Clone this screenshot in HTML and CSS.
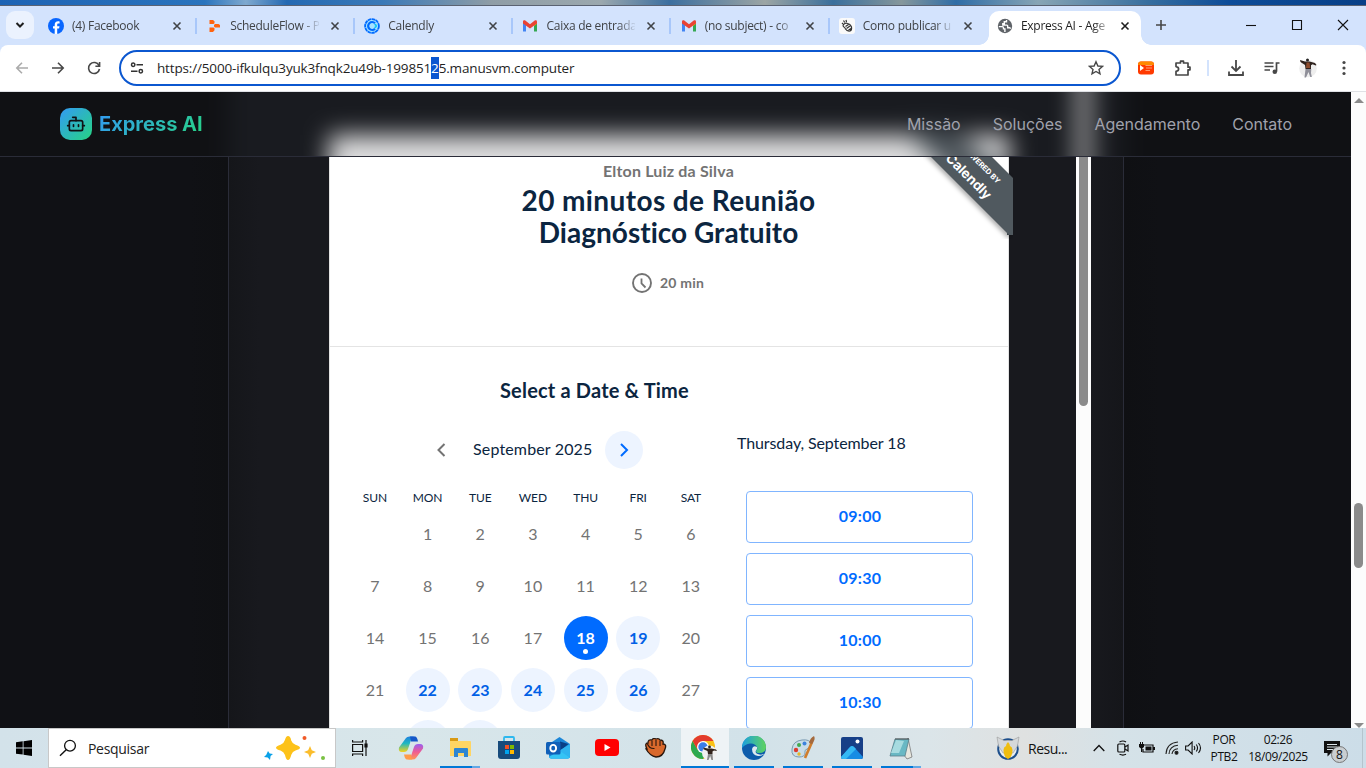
FILE: index.html
```html
<!DOCTYPE html>
<html lang="pt-BR">
<head>
<meta charset="utf-8">
<title>Express AI - Agendamento</title>
<link rel="stylesheet" href="styles.css">
</head>
<body>
<div class="screen">
  <div class="wallpaper"></div>
  <div class="tabstrip">
    <div class="tab-search"><svg width="10" height="10" viewBox="0 0 10 10"><path d="M1.500 3l3.500 3.500L8.500 3" fill="none" stroke="#1f1f1f" stroke-width="2"/></svg></div>
    <div class="tab">
      <svg class="fav" viewBox="0 0 16 16"><circle cx="8" cy="8" r="8" fill="#0866ff"/><path d="M6.700 15.900V10.600H5V8.200h1.700V7c0-2.500 1.200-3.700 3.500-3.700.5 0 1 .1 1.400.1v2.100h-1.100c-1 0-1.300.4-1.300 1.300v1.400h2.300l-.4 2.400H9.200v5.300z" fill="#fff"/></svg>
      <span class="tab-label">(4) Facebook</span><svg class="x" viewBox="0 0 16 16"><path d="M4.500 4.500l7 7m0-7l-7 7"/></svg><i class="sep"></i>
    </div>
    <div class="tab">
      <svg class="fav" viewBox="0 0 16 16"><path d="M3.500 2H7l1.500 1.200v2L7.500 6h-4zM9 6h3.500L14 7v2.500H9L8 8.500v-1.500zM3.500 9.500h4l1 .8v2L7 14H3.500z" fill="#ff6410"/></svg>
      <span class="tab-label">ScheduleFlow - P</span><svg class="x" viewBox="0 0 16 16"><path d="M4.500 4.500l7 7m0-7l-7 7"/></svg><i class="sep"></i>
    </div>
    <div class="tab">
      <svg class="fav" viewBox="0 0 16 16"><circle cx="8" cy="8" r="6.900" fill="#a6e1ff" stroke="#006bff" stroke-width="1.800" stroke-dasharray="3.500 .5"/><path d="M11 10.800A4 4 0 1 1 11 5.200" fill="none" stroke="#006bff" stroke-width="2.200"/><path d="M10.500 6.300q3.500 1.500 0 3.500" fill="none" stroke="#0ac4f5" stroke-width="1.600"/></svg>
      <span class="tab-label">Calendly</span><svg class="x" viewBox="0 0 16 16"><path d="M4.500 4.500l7 7m0-7l-7 7"/></svg><i class="sep"></i>
    </div>
    <div class="tab">
      <svg class="fav" viewBox="0 0 16 16"><path d="M1 4v9.500h3V7z" fill="#4285f4"/><path d="M15 4v9.500h-3V7z" fill="#34a853"/><path d="M12 4.500V8l3-2.300V4z" fill="#fbbc04"/><path d="M1 3.800C1 2.300 2.500 2 3.600 2.800L8 6.200l4.400-3.400C13.500 2 15 2.300 15 3.800v1.800l-7 5-7-5z" fill="#ea4335"/></svg>
      <span class="tab-label">Caixa de entrada</span><svg class="x" viewBox="0 0 16 16"><path d="M4.500 4.500l7 7m0-7l-7 7"/></svg><i class="sep"></i>
    </div>
    <div class="tab">
      <svg class="fav" viewBox="0 0 16 16"><path d="M1 4v9.500h3V7z" fill="#4285f4"/><path d="M15 4v9.500h-3V7z" fill="#34a853"/><path d="M12 4.500V8l3-2.300V4z" fill="#fbbc04"/><path d="M1 3.800C1 2.300 2.500 2 3.600 2.800L8 6.200l4.400-3.400C13.500 2 15 2.300 15 3.800v1.800l-7 5-7-5z" fill="#ea4335"/></svg>
      <span class="tab-label">(no subject) - co</span><svg class="x" viewBox="0 0 16 16"><path d="M4.500 4.500l7 7m0-7l-7 7"/></svg><i class="sep"></i>
    </div>
    <div class="tab">
      <svg class="fav" viewBox="0 0 16 16"><rect width="16" height="16" rx="3" fill="#fafafa"/><g fill="none" stroke="#333" stroke-width="1.200"><path d="M4.500 6.500q2-2 4-1 3 .5 4 3.500.5 3-1.500 4-3 .5-4.500-2-.5-1.500-1.500-2-1.500-1-.5-2.500zM6.500 8.500l3-2M7.500 10.500l3.500-2.500M9.500 12l2.500-1.500"/><path d="M4.500 2.500l1.200 2M7 2l.5 2.200M3 5l1 1"/></g></svg>
      <span class="tab-label">Como publicar u</span><svg class="x" viewBox="0 0 16 16"><path d="M4.500 4.500l7 7m0-7l-7 7"/></svg>
    </div>
    <div class="tab active">
      <svg class="fav" viewBox="0 0 16 16"><circle cx="8" cy="8" r="7.200" fill="#5f6368"/><path d="M1.800 8.600h3.400q1.300 0 1.300 1.300v1h1.400v3.200M9.500 2v1.700H7.300v2h-1.500v1.400h4q.9 0 .9 1v1.600h1.800q.9 0 1 1" fill="none" stroke="#fff" stroke-width="1.400"/></svg>
      <span class="tab-label">Express AI - Age</span><svg class="x" viewBox="0 0 16 16"><path d="M4.500 4.500l7 7m0-7l-7 7"/></svg>
    </div>
    <svg class="plus" width="12" height="12" viewBox="0 0 12 12"><path d="M6 1v10M1 6h10" stroke="#474747" stroke-width="1.600"/></svg>
    <div class="winctl">
      <svg width="12" height="12" viewBox="0 0 12 12"><path d="M1 6.500h10" /></svg>
      <svg width="12" height="12" viewBox="0 0 12 12"><path d="M1.500 1.500h9v9h-9z"/></svg>
      <svg width="12" height="12" viewBox="0 0 12 12"><path d="M1 1l10 10M11 1L1 11"/></svg>
    </div>
  </div>

  <div class="toolbar">
    <div class="navbtns">
      <svg class="dim" viewBox="0 0 16 16"><path d="M14 8H3M8 2.800L2.800 8 8 13.200"/></svg>
      <svg viewBox="0 0 16 16"><path d="M2 8h11M8 2.800L13.200 8 8 13.200"/></svg>
      <svg viewBox="0 0 16 16"><path d="M13 5.500A5.500 5.500 0 1 0 13.500 9M13.600 2v4.200H9.400"/></svg>
    </div>
    <div class="omnibox">
      <svg class="tune" viewBox="0 0 14 14"><g fill="none" stroke="#333" stroke-width="1.500"><circle cx="3.200" cy="3.800" r="1.700"/><path d="M6.500 3.800H13M1 10.200h6.500"/><circle cx="10.800" cy="10.200" r="1.700"/></g></svg>
      <span class="url">https://5000-ifkulqu3yuk3fnqk2u49b-199851<mark>2</mark>5.manusvm.computer</span>
      <svg class="star" viewBox="0 0 16 16"><path d="M8 1.800l1.900 4.200 4.500.4-3.400 3 1 4.500L8 11.500 4 13.900l1-4.500-3.400-3L6.100 6z" fill="none" stroke="#474747" stroke-width="1.400"/></svg>
    </div>
    <div class="actions">
      <svg width="16" height="14" viewBox="0 0 16 14"><rect width="16" height="13" y=".5" rx="3" fill="#ff3a00"/><path d="M0 4q0-3.500 3-3.500h10q3 0 3 3.500z" fill="#ff8a00"/><path d="M2 4l4 3-4 3z" fill="#fff"/><path d="M7.500 4.500h6.500M8 7h6M7.500 9.500H12" stroke="#ff9a70" stroke-width="1.200"/></svg>
      <svg class="puzzle" width="18" height="18" viewBox="0 0 18 18"><path d="M2 4h4.500V2.200h3V4H14v4.200h2v2.600h-2V16H2v-3.600q2.600-.4 2.600-2.400T2 7.600z" fill="none" stroke="#474747" stroke-width="1.700" stroke-linejoin="round"/></svg>
      <i class="divider"></i>
      <svg class="act" width="18" height="18" viewBox="0 0 18 18"><path d="M9 1v11M4.500 7.500L9 12l4.500-4.500M2 12.500V16h14v-3.500" fill="none" stroke="#474747" stroke-width="1.800"/></svg>
      <svg class="act" width="18" height="18" viewBox="0 0 18 18"><path d="M1.500 4h9M1.500 7.500h9M1.500 11h5.500M16.500 4h-3v8.500" fill="none" stroke="#474747" stroke-width="1.700"/><circle cx="11.800" cy="12.700" r="2.300" fill="#474747"/></svg>
      <svg class="act" width="18" height="20" viewBox="0 0 18 20"><circle cx="9" cy="10.500" r="8.800" fill="#eee"/><circle cx="8.500" cy="2" r="1.500" fill="#222"/><path d="M1 2l5 1.500h4.500L16 5l1.500 2-.7.500-3.300-1.200-1.500 1V11H6.500L6 7 1.500 4z" fill="#2d211c"/><path d="M7.500 4.500h3l.8 5.500H7z" fill="#8c4a2c"/><path d="M6.500 11h5.800l-.3 4 .8 4h-1.500L9.500 14 7 19.500H5.500z" fill="#8f8f99"/></svg>
      <svg class="more" width="4" height="16" viewBox="0 0 4 16" fill="#474747"><circle cx="2" cy="2.500" r="1.600"/><circle cx="2" cy="8" r="1.600"/><circle cx="2" cy="13.500" r="1.600"/></svg>
    </div>
  </div>

  <div class="viewport">
    <div class="page">
      <div class="panel">
        <div class="card">
          <p class="owner">Elton Luiz da Silva</p>
          <h1><span>20 minutos de Reunião</span><br><em>Diagnóstico Gratuito</em></h1>
          <p class="duration"><svg width="20" height="20" viewBox="0 0 20 20"><circle cx="10" cy="10" r="9" fill="none" stroke="#737373" stroke-width="1.900"/><path d="M9.500 5.500v5l4 4" fill="none" stroke="#737373" stroke-width="1.800"/></svg>20 min</p>
          <div class="booking">
            <section class="calendar">
              <h2>Select a Date &amp; Time</h2>
              <div class="month">
                <svg class="prev" width="38" height="38" viewBox="0 0 38 38"><path d="M21.500 13L15.500 19l6 6" fill="none" stroke="#737373" stroke-width="2"/></svg>
                <span>September 2025</span>
                <svg width="38" height="38" viewBox="0 0 38 38"><circle cx="19" cy="19" r="19" fill="#edf4ff"/><path d="M16 13l6 6-6 6" fill="none" stroke="#006bff" stroke-width="2"/></svg>
              </div>
              <div class="grid days"><b>SUN</b><b>MON</b><b>TUE</b><b>WED</b><b>THU</b><b>FRI</b><b>SAT</b></div>
              <div class="grid dates">
                <span></span><span>1</span><span>2</span><span>3</span><span>4</span><span>5</span><span>6</span>
                <span>7</span><span>8</span><span>9</span><span>10</span><span>11</span><span>12</span><span>13</span>
                <span>14</span><span>15</span><span>16</span><span>17</span><span class="open today">18</span><span class="open">19</span><span>20</span>
                <span>21</span><span class="open">22</span><span class="open">23</span><span class="open">24</span><span class="open">25</span><span class="open">26</span><span>27</span>
                <span></span><span class="open"></span><span class="open"></span>
              </div>
            </section>
            <section class="times">
              <p>Thursday, September 18</p>
              <button>09:00</button><button>09:30</button><button>10:00</button><button>10:30</button>
            </section>
          </div>
          <div class="ribbon">
            <svg width="90" height="110" viewBox="0 0 90 110"><path d="M84 100v6h6v-6z" fill="#3c464c"/><path d="M-22 -2L84 104l2 2h4V49L39 -2z" fill="#50595f"/></svg>
            <span class="powered">POWERED BY</span><span class="brand">Calendly</span>
          </div>
        </div>
        <div class="frame-scroll"><i></i></div>
      </div>
      <header class="site-nav">
        <svg class="glow" width="1351" height="64" viewBox="0 0 1351 64">
          <defs><filter id="soft" filterUnits="userSpaceOnUse" x="-60" y="-100" width="1480" height="330" color-interpolation-filters="sRGB"><feGaussianBlur stdDeviation="12"/></filter></defs>
          <g filter="url(#soft)">
            <path d="M-60 -100h1480v330H-60z" fill="#101114"/>
            <path d="M228 -100h896v330H228z" fill="#191b20"/>
            <path d="M329 43h680v180H329z" fill="#dededf"/>
            <path d="M903 37h49l61 49v60z" fill="#4b5359"/>
            <path d="M1076 -100h15v330h-15z" fill="#a5a5a6"/>
          </g>
        </svg>
        <div class="logo">
          <span class="mark"><svg width="20" height="20" viewBox="0 0 24 24" fill="none" stroke="#101115" stroke-width="2" stroke-linecap="round" stroke-linejoin="round"><path d="M12 8V4H8"/><rect width="16" height="12" x="4" y="8" rx="2"/><path d="M2 14h2M20 14h2M15 13v2M9 13v2"/></svg></span>
          <span class="name">Express AI</span>
        </div>
        <nav><a>Missão</a><a>Soluções</a><a>Agendamento</a><a>Contato</a></nav>
      </header>
    </div>
    <div class="scrollbar"><i class="up"></i><i class="thumb"></i><i class="down"></i></div>
  </div>

  <div class="taskbar">
    <div class="start"><svg width="16" height="16" viewBox="0 0 16 16"><path d="M0 2.300L6.700 1.300V7.500H0zM7.500 1.200L16 0v7.500H7.500zM0 8.400h6.700v6.200L0 13.700zM7.500 8.400H16V16l-8.500-1.200z"/></svg></div>
    <div class="search">
      <svg width="18" height="18" viewBox="0 0 18 18"><circle cx="11" cy="6.700" r="5.400" fill="none" stroke="#111" stroke-width="1.300"/><path d="M7.200 10.700L1 16.800" stroke="#111" stroke-width="1.400"/></svg>
      <span>Pesquisar</span>
      <svg class="sparks" width="62" height="28" viewBox="0 0 62 28"><path d="M24 2q2.500 0 3.200 4.500 1 3 4.300 4.200Q36 12 36 13.700q0 1.500-4.500 2.700-3 1-4.200 4.300Q26 26 24 26q-2 0-3-5-1.200-3.500-4.500-4.500Q12 15.500 12 13.700q0-1.700 4.500-3 3.500-1.200 4.300-4.400Q22 2 24 2z" fill="#fdc21a"/><path d="M46 12l1.800 4.200L52 18l-4.200 1.700L46 24l-1.800-4.300L40 18l4.200-1.800z" fill="#fbbd2c"/><path d="M4 17l1.700 2.400L9 20l-2.400 2L6 26l-2.300-2.600L0 23l2.300-2.200z" fill="#0aa1e8"/><circle cx="40.500" cy="4" r="2" fill="#f05a28"/><circle cx="59" cy="24" r="2" fill="#7ac143"/></svg>
    </div>
    <div class="apps">
      <span class="app tv"><svg width="16" height="18" viewBox="0 0 16 18" fill="none" stroke="#111" stroke-width="1.200"><path d="M.6 5.500h10v7H.6zM.6 1v2h10V1M.6 17v-2h10v2M14 1v16"/><path d="M13 5h2v3h-2z" fill="#111"/></svg></span>
      <span class="app"><svg width="26" height="24" viewBox="0 0 26 24"><defs><linearGradient id="c1" x1="0" y1="0" x2="0" y2="1"><stop offset="0" stop-color="#1f7fe0"/><stop offset=".45" stop-color="#1fb8c0"/><stop offset="1" stop-color="#f3d21c"/></linearGradient><linearGradient id="c2" x1="0" y1="0" x2="0" y2="1"><stop offset="0" stop-color="#9a5ff0"/><stop offset=".5" stop-color="#ee5c94"/><stop offset="1" stop-color="#ff9655"/></linearGradient></defs><path d="M8 2q1-1.500 3.500-1.500H17q-3 0-4 3.500l-3 9q-1 3-4 3H4q-4 0-3-4.500z" fill="url(#c1)"/><path d="M12 .5h5q2 0 3 5h-7z" fill="#1557c8"/><path d="M18 22q-1 1.500-3.500 1.500H9q3 0 4-3.500l3-9q1-3 4-3h2q4 0 3 4.500z" fill="url(#c2)"/><path d="M14 23.500H9q-2 0-3-5h7z" fill="#ff9a4a"/></svg></span>
      <span class="app run split"><svg width="24" height="20" viewBox="0 0 24 20"><path d="M2 0h8v4H2z" fill="#d99a14"/><path d="M2 3h20q1 0 1 1v14H2z" fill="#ffd563"/><path d="M6 19v-8q0-1 1-1h12q1 0 1 1v8h-4v-4h-6v4z" fill="#2e86d2"/></svg></span>
      <span class="app"><svg width="24" height="24" viewBox="0 0 24 24"><path d="M7 6V2q0-1 1-1h8q1 0 1 1v4" fill="none" stroke="#2eb8ee" stroke-width="1.800"/><path d="M1 5h22v15q0 3-3 3H4q-3 0-3-3z" fill="#174b7c"/><path d="M8 9h4v4H8z" fill="#f25022"/><path d="M13 9h4v4h-4z" fill="#7fba00"/><path d="M8 14h4v4H8z" fill="#00a4ef"/><path d="M13 14h4v4h-4z" fill="#ffb900"/></svg></span>
      <span class="app"><svg width="24" height="22" viewBox="0 0 24 22"><path d="M3 7L13.500 0 24 7v12q0 2.500-2.500 2.500h-16Q3 21.500 3 19z" fill="#1c86d8"/><path d="M14 4.500l8.500 2.500-8.500 7z" fill="#0a3f86"/><path d="M24 7v12q0 2.500-2.500 2.500h-16Q4 21.500 3 20z" fill="#2fb4f0"/><path d="M14 14l9.500 6.500q-.8 1-2 1h-16q-1.500 0-2.500-1.500z" fill="#35c4f5"/><path d="M0 6.500Q0 5 1.500 5H13q1.500 0 1.500 1.500V16q0 1.500-1.500 1.500H1.500Q0 17.500 0 16z" fill="#0f5fb8"/><ellipse cx="7.200" cy="11.200" rx="2.900" ry="3.300" fill="none" stroke="#fff" stroke-width="1.900"/></svg></span>
      <span class="app"><svg width="24" height="18" viewBox="0 0 24 18"><rect width="24" height="17" rx="4" fill="#f00"/><path d="M9.500 5v7l6-3.500z" fill="#fff"/></svg></span>
      <span class="app"><svg width="22" height="20" viewBox="0 0 22 20"><path d="M2 11Q-1 5 3 5q0-4 4-3 1-2.500 4-1 3-1 4 1 4 0 3 4 4 0 2 5-2 8-9 8-6-1-10-8z" fill="#d9682b" stroke="#29170d" stroke-width="1.300"/><path d="M7 3v5M11 2v6M15 3v5M2.500 6q2 5 7 4.500" fill="none" stroke="#29170d" stroke-width="1.100"/></svg></span>
      <span class="app run wide"><svg width="28" height="26" viewBox="0 0 28 26"><circle cx="12" cy="12" r="12" fill="#fbc116"/><path d="M1.600 6A12 12 0 0 0 12 24l5.200-9H6.800z" fill="#2da94f"/><path d="M1.600 6A12 12 0 0 1 22.400 6H12L6.800 15z" fill="#e33b2e"/><circle cx="12" cy="12" r="6" fill="#fff"/><circle cx="12" cy="12" r="4.700" fill="#3b7de8"/><circle cx="18.500" cy="18" r="7.500" fill="#f1f1f1"/><circle cx="18.500" cy="12" r="1.400" fill="#222"/><path d="M12.500 12.500l4 1h4l4.500 1 1 1.500-3-.5-1.500 1V19H17l-.5-3-4-1.800z" fill="#33241c"/><path d="M17 19h4.500l.5 6h-1.500L19.200 21l-1.700 4H16z" fill="#888"/></svg></span>
      <span class="app run"><svg width="24" height="24" viewBox="0 0 24 24"><defs><linearGradient id="e1" x1="0" y1="0" x2="1" y2="0"><stop offset="0" stop-color="#1a9fe0"/><stop offset="1" stop-color="#5fd35e"/></linearGradient></defs><circle cx="12" cy="12" r="12" fill="#0d5cab"/><path d="M0 12A12 12 0 0 1 24 11q0 6-7 6-3 0-3-2 2-2 1-4-2-4-7-3.500Q3 8 0 12z" fill="url(#e1)"/><path d="M15 11q-4-2-5 2 0 6 6 7 4 .5 6.500-2.500-2 1.500-5 1-5-1-3.500-4 1.500-1.500 1-3.500z" fill="#dce8ee"/></svg></span>
      <span class="app run"><svg width="26" height="24" viewBox="0 0 26 24"><path d="M2 13Q3 5 12 4q8-1 9 4 0 4-4 5-3 1-2 4 0 4-6 4-8 0-7-8z" fill="#c9dde8" stroke="#7a9bb2"/><circle cx="6" cy="14" r="2.200" fill="#dc3c2f"/><circle cx="9" cy="9" r="2" fill="#43a950"/><circle cx="14.500" cy="7.500" r="2" fill="#3d83dc"/><circle cx="9" cy="18" r="1.700" fill="#e5b928"/><path d="M22 6l-7 16" stroke="#cf7d2d" stroke-width="2.600"/><path d="M24 0q2 3-2 8l-3-1q1-5 5-7z" fill="#a56a3d"/></svg></span>
      <span class="app run"><svg width="22" height="22" viewBox="0 0 22 22"><rect width="22" height="22" rx="2" fill="#173f87"/><path d="M0 20l9-10q2-2 4 0l9 10q0 2-2 2H2q-2 0-2-2z" fill="#168ce4"/><path d="M0 20l9-10q2-2 4 0l2 2L5 22H2q-2 0-2-2z" fill="#35b8f4"/><circle cx="16.500" cy="4.500" r="2" fill="#fff"/></svg></span>
      <span class="app run split"><svg width="24" height="24" viewBox="0 0 24 24"><path d="M19 2l4 19-5 2-3-4z" fill="#e7e7df" stroke="#777" stroke-width=".8"/><path d="M6 3h14l-4 17H1z" fill="#69b8c4" stroke="#5b7f8a" stroke-width=".8"/><path d="M7 4l8 1-5 12H2z" fill="#a7dbe0"/><path d="M6.500 3h13" stroke="#555" stroke-width="2" stroke-dasharray="1 1"/></svg></span>
    </div>
    <div class="tray">
      <svg class="news" width="24" height="24" viewBox="0 0 24 24"><circle cx="12" cy="13" r="9.800" fill="#e9eef2" stroke="#1d4f8c" stroke-width="2"/><path d="M1 1l7 3.500h8L23 1l-1.500 9-4.500 7H7l-4.500-7z" fill="#d5d8da" stroke="#999" stroke-width=".6"/><path d="M12 6q2 2 2 4 2.500 1 2.500 4 0 7-4.500 9-4.500-2-4.500-9 0-3 2.500-4 0-2 2-4z" fill="#efbd0f"/></svg>
      <span class="resu">Resu...</span>
      <svg class="chev" width="12" height="8" viewBox="0 0 12 8"><path d="M.7 7L6 1.500 11.300 7" fill="none" stroke="#111" stroke-width="1.300"/></svg>
      <svg class="cam" width="12" height="16" viewBox="0 0 12 16" fill="none" stroke="#111" stroke-width="1.200"><rect x=".8" y="4" width="7" height="8" rx="1"/><path d="M8 7l3-2v6L8 9M2.500 2Q6 0 9 2M2.500 14.300q3.500 1.500 6.500 0"/></svg>
      <svg class="bat" width="16" height="12" viewBox="0 0 16 12"><path d="M5 3h9v7H4V7" fill="none" stroke="#111" stroke-width="1.200"/><path d="M6.500 4.500h6v4h-6zM14 5h2v3h-2zM0 2h5v3L3.200 6.500V10H2V6.500L0 5zM1 0h1v2H1zM3 0h1v2H3z" fill="#111"/></svg>
      <svg class="wifi" width="14" height="14" viewBox="0 0 14 14" fill="none" stroke="#222" stroke-width="1.100"><path d="M1 13Q1.500 2 13 1M4 13Q4.500 5 13 4.300M7 13q.5-4.800 6-5.300"/><circle cx="11.500" cy="11.800" r="1.500" fill="#111"/></svg>
      <svg class="vol" width="17" height="14" viewBox="0 0 17 14" fill="none" stroke="#111" stroke-width="1.100"><path d="M.6 5h2.500l4-4v12l-4-4H.6zM9 5q1.500 2 0 4M11.300 3.500q2.500 3.500 0 7M13.500 2q4 5 0 10"/></svg>
      <div class="two lang"><span>POR</span><span>PTB2</span></div>
      <div class="two clock"><span>02:26</span><span>18/09/2025</span></div>
      <div class="notif"><svg width="18" height="17" viewBox="0 0 18 17"><path d="M1 1h16v12H8l-3.500 3.500V13H1z" fill="#111"/><path d="M4 4.500h10M4 7h10M4 9.500h6" stroke="#dce6ea" stroke-width="1.100"/></svg><b>8</b></div>
    </div>
  </div>
</div>
</body>
</html>
```
FILE: styles.css
```css
* { box-sizing: border-box; }
body { margin: 0; font-family: "Open Sans", "Noto Sans", sans-serif; }
p, h1, h2 { margin: 0; }
svg { flex: none; display: block; }
.screen { width: 1366px; height: 768px; overflow: hidden; display: flex; flex-direction: column; }

.wallpaper { height: 6px; flex: none; border-bottom: 1px solid #5a6272; background: linear-gradient(90deg, #1d63b4 0, #2a74bd 15%, #7fa9cf 18%, #2469b2 21%, #3a7ab8 28%, #8f9da6 36%, #9ba8ae 44%, #3c6f9f 49%, #9ca5a4 56%, #3a6f9c 61%, #86979b 66%, #2f6da6 70%, #88a5b5 76%, #386f9f 84%, #0d4c98 90%, #073f87 100%); }

.tabstrip { height: 39px; flex: none; background: #d3e3fd; display: flex; align-items: flex-start; padding: 5px 0 0 6px; }
.tab-search { width: 28px; height: 28px; border-radius: 9px; background: #ebf2fe; display: flex; align-items: center; justify-content: center; margin-right: 6px; }
.tab { width: 158.17px; height: 34px; padding: 0 1px 5px 8px; display: flex; align-items: center; flex: none; }
.fav { width: 16px; height: 16px; margin-right: 8px; }
.tab-label { width: 89px; margin-right: 8px; overflow: hidden; white-space: nowrap; font-size: 12px; line-height: 18px; letter-spacing: -.27px; color: #404347; mask-image: linear-gradient(90deg, #000 72px, transparent 91px); }
.x { width: 16px; height: 16px; }
.x path { stroke: #404347; stroke-width: 1.6; fill: none; }
.sep { width: 2px; height: 16px; background: #a8c7fa; margin-left: 10px; }
.active { width: 152px; background: #fff; border-radius: 10px 10px 0 0; position: relative; z-index: 1; }
.active::before, .active::after { content: ""; position: absolute; bottom: 0; width: 10px; height: 10px; }
.active::before { left: -10px; background: radial-gradient(circle at 0 0, transparent 9.5px, #fff 10px); }
.active::after { right: -10px; background: radial-gradient(circle at 100% 0, transparent 9.5px, #fff 10px); }
.active .tab-label { color: #1f1f1f; }
.active .x { margin-left: -1px; }
.active .x path { stroke: #1f1f1f; }
.plus { margin: 8px 0 0 14px; }
.winctl { display: flex; gap: 34px; margin: 8px 17px 0 auto; }
.winctl path { fill: none; stroke: #111; stroke-width: 1.1; }

.screen { background: #d3e3fd; }
.toolbar { height: 47px; flex: none; background: #fff; border-bottom: 1px solid #dfe1e5; border-radius: 8px 8px 0 0; display: flex; align-items: center; padding: 0 20px 0 14px; }
.navbtns { display: flex; gap: 20px; margin-right: 17px; }
.navbtns svg { width: 16px; height: 16px; }
.navbtns path { fill: none; stroke: #474747; stroke-width: 1.6; }
.navbtns .dim path { stroke: #ababab; }
.omnibox { width: 1002px; height: 36px; border: 2px solid #0b57d0; border-radius: 18px; display: flex; align-items: center; padding: 0 15px 0 9px; }
.tune { width: 14px; height: 14px; margin-right: 13px; }
.url { font-size: 13.5px; line-height: 22px; letter-spacing: -.16px; color: #1f1f1f; white-space: nowrap; }
.url mark { background: #0b57d0; color: #fff; display: inline-block; }
.star { width: 16px; height: 16px; margin-left: auto; }
.actions { display: flex; align-items: center; margin-left: 17px; }
.puzzle { margin-left: 20px; }
.divider { width: 2px; height: 16px; background: #d3e3fd; margin-left: 15px; }
.act { margin-left: 18px; }
.more { margin-left: 25px; }

.viewport { height: 636px; flex: none; display: flex; background: #101115; }
.page { width: 1351px; height: 636px; position: relative; overflow: hidden; background: linear-gradient(90deg, #101115 0 190px, #0f1013 228px, #0f1013 1124px, #101115 1160px); }
.panel { width: 896px; height: 636px; margin-left: 228px; border: solid #2a2c38; border-width: 0 1px; background: linear-gradient(90deg, #15161a, #18191e 30px, #18191e 860px, #15161a); display: flex; }
.card { width: 680px; height: 594px; margin: 42px 0 0 100px; background: #fff; border: 1px solid #e3e3e3; border-width: 0 1px; position: relative; padding-top: 25px; text-align: center; font-family: Lato, "Open Sans", sans-serif; }
.owner { font-size: 16px; line-height: 24px; font-weight: 700; color: #737373; letter-spacing: .17px; margin-left: -1px; }
.card h1 { font-size: 28px; line-height: 32px; font-weight: 700; color: #0b2540; margin: 1px 0 0 -1px; letter-spacing: .4px; }
.card h1 em { font-style: normal; letter-spacing: .02px; }
.duration { display: flex; align-items: center; justify-content: center; gap: 8px; font-size: 14px; line-height: 20px; font-weight: 700; color: #737373; margin: 25px 0 0 -2px; letter-spacing: .2px; }
.booking { border-top: 1px solid #e4e4e4; margin-top: 53px; display: flex; text-align: left; height: 382px; overflow: hidden; }
.calendar { width: 369px; margin-left: 18px; }
.calendar h2 { font-size: 20px; line-height: 24px; font-weight: 700; color: #0b2540; margin: 31px 0 0 152px; white-space: nowrap; letter-spacing: .18px; }
.month { display: flex; align-items: center; width: 220px; margin: 29px 0 0 75px; font-size: 16px; line-height: 20px; color: #0b2540; white-space: nowrap; }
.month span { width: 133px; margin: 0 -1px 2px 12px; letter-spacing: .15px; }
.grid { display: grid; grid-template-columns: repeat(7, 52.67px); justify-items: center; margin-left: .6px; }
.days { margin-top: 20px; font-size: 12px; line-height: 18px; color: #0b2540; }
.days b { font-weight: 400; letter-spacing: -.1px; }
.dates { grid-auto-rows: 52px; align-items: center; margin-top: 1px; font-size: 16px; color: #737373; }
.dates span { width: 44px; height: 44px; line-height: 44px; border-radius: 50%; text-align: center; position: relative; }
.dates .open { background: #edf4ff; color: #0060e6; font-weight: 700; }
.dates .today { background: #006bff; color: #fff; }
.today::after { content: ""; position: absolute; left: 19.5px; top: 33px; width: 5px; height: 5px; border-radius: 50%; background: #fff; }
.times { width: 227px; margin-left: 29px; }
.times p { font-size: 16px; line-height: 24px; color: #0b2540; margin: 84px 0 36px -9px; white-space: nowrap; letter-spacing: -.1px; }
.times button { display: block; width: 227px; height: 52px; margin: 0 0 10px; padding: 0 0 3px 1px; border: 1px solid #80b5ff; border-radius: 4px; background: #fff; color: #006bff; font: 700 16px Lato, "Open Sans", sans-serif; letter-spacing: .3px; }
.ribbon { position: absolute; right: -5px; top: -5px; width: 90px; height: 110px; overflow: hidden; color: #fff; font-weight: 700; white-space: nowrap; }
.ribbon svg { filter: drop-shadow(-2px 2px 2px rgba(0, 0, 0, .3)); }
.ribbon span { position: absolute; line-height: 16px; width: 80px; transform: rotate(45deg); text-align: center; font-family: Inter, sans-serif; }
.powered { left: 18px; top: 28px; font-size: 7.5px; }
.brand { left: 6px; top: 39px; font-size: 13.5px; }
.frame-scroll { width: 15px; margin-left: 67px; background: #fcfcfc; padding: 0 3px; }
.frame-scroll i { display: block; height: 314px; width: 9px; background: #8b8b8b; border-radius: 0 0 5px 5px; }

.site-nav { position: absolute; left: 0; top: 0; width: 1351px; height: 65px; border-bottom: 1px solid #2a2c38; background: #101114; display: flex; align-items: center; justify-content: space-between; padding: 0 59px 0 60px; font-family: Inter, sans-serif; }
.glow { position: absolute; left: 0; top: 0; overflow: hidden; }
.logo { display: flex; align-items: center; gap: 7px; position: relative; }
.mark { width: 32px; height: 32px; border-radius: 10px; background: linear-gradient(135deg, #339af5, #26d482); display: flex; align-items: center; justify-content: center; }
.name { font-size: 20px; line-height: 28px; font-weight: 700; background: linear-gradient(135deg, #339af5, #26d482); background-clip: text; color: transparent; }
.site-nav nav { display: flex; gap: 32px; font-size: 16px; color: #a0a2ac; position: relative; }

.scrollbar { width: 15px; background: #fcfcfc; display: flex; flex-direction: column; align-items: center; }
.up { border: 5px solid transparent; border-top: 0; border-bottom: 5px solid #8b8b8b; margin-top: 6px; }
.thumb { width: 9px; height: 65px; border-radius: 5px; background: #8b8b8b; margin-top: 400px; }
.down { border: 5px solid transparent; border-bottom: 0; border-top: 5px solid #8b8b8b; margin-top: auto; }

.taskbar { height: 40px; flex: none; background: linear-gradient(90deg, #d3e2ea, #d8e6ea 30%, #d2e2e9 55%, #dbe5e9 68%, #dfe1e1 75%, #d5e2e8 82%, #ccdde8); display: flex; color: #111; }
.start { width: 48px; display: flex; align-items: center; justify-content: center; }
.search { width: 288px; border: 1px solid #c8c8c8; background: #fff; display: flex; align-items: center; padding: 0 9px 0 10px; font-size: 14px; letter-spacing: -.3px; color: #222; }
.search span { margin-left: 11px; }
.sparks { margin-left: auto; }
.apps { display: flex; gap: 1px; }
.app { width: 48px; height: 40px; display: flex; align-items: center; justify-content: center; position: relative; }
.tv { margin-right: 2px; }
.run::after { content: ""; position: absolute; left: 4px; right: 4px; bottom: 0; height: 2px; background: #0078d7; }
.split::after { background: linear-gradient(90deg, #0078d7 32px, #62a8e5 32px); }
.wide { background: #eef3f6; }
.wide::after { left: 0; right: 0; }
.tray { display: flex; align-items: center; flex: 1; padding-left: 71px; font-size: 12px; border-right: 1px solid #b5c4cd; margin-right: 3px; }
.resu { font-size: 14px; width: 40px; margin-left: 8px; letter-spacing: -.5px; }
.chev { margin-left: 25px; }
.cam { margin-left: 12px; }
.bat { margin-left: 10px; }
.wifi { margin-left: 10px; }
.vol { margin-left: 6px; }
.two { display: flex; flex-direction: column; align-items: center; line-height: 17px; letter-spacing: -.4px; margin-top: -1px; }
.lang { width: 32px; margin-left: 6px; }
.clock { width: 64px; margin-left: 6px; }
.notif { position: relative; margin-left: 13px; }
.notif b { position: absolute; left: 8px; top: 6px; width: 17px; height: 17px; border-radius: 50%; background: #c9ced1; border: 1px solid #777; font: 400 12px/15px "Open Sans", sans-serif; text-align: center; }
```
